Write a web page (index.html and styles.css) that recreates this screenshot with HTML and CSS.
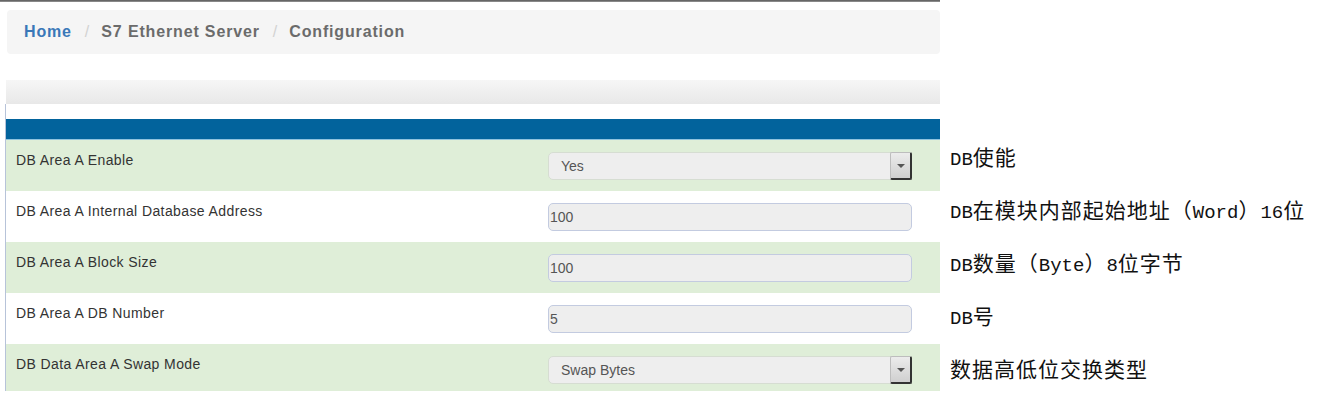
FILE: index.html
```html
<!DOCTYPE html>
<html>
<head>
<meta charset="utf-8">
<link rel="stylesheet" href="styles.css">
</head>
<body>
<div class="page">
  <div class="main">
    <div class="topline"></div>
    <div class="breadcrumb">
      <span class="crumb home">Home</span><span class="divider">/</span><span class="crumb">S7 Ethernet Server</span><span class="divider">/</span><span class="crumb">Configuration</span>
    </div>
    <div class="toolbar"></div>
    <div class="panel">
      <div class="panel-gap"></div>
      <div class="panel-head"></div>
      <div class="row green">
        <div class="label">DB Area A Enable</div>
        <div class="field"><div class="select"><span>Yes</span><div class="arrow"><i></i></div></div></div>
      </div>
      <div class="row">
        <div class="label">DB Area A Internal Database Address</div>
        <div class="field"><div class="input">100</div></div>
      </div>
      <div class="row green">
        <div class="label">DB Area A Block Size</div>
        <div class="field"><div class="input">100</div></div>
      </div>
      <div class="row">
        <div class="label">DB Area A DB Number</div>
        <div class="field"><div class="input">5</div></div>
      </div>
      <div class="row green last">
        <div class="label">DB Data Area A Swap Mode</div>
        <div class="field"><div class="select"><span>Swap Bytes</span><div class="arrow"><i></i></div></div></div>
      </div>
    </div>
  </div>
  <div class="notes">
    <div class="note"><span class="lat">DB</span>使能</div>
    <div class="note"><span class="lat">DB</span>在模块内部起始地址（<span class="lat">Word</span>）<span class="lat">16</span>位</div>
    <div class="note"><span class="lat">DB</span>数量（<span class="lat">Byte</span>）<span class="lat">8</span>位字节</div>
    <div class="note"><span class="lat">DB</span>号</div>
    <div class="note">数据高低位交换类型</div>
  </div>
</div>
</body>
</html>
```

FILE: styles.css
```css
html, body {
  margin: 0;
  padding: 0;
  background: #ffffff;
}

.page {
  display: flex;
  gap: 10px;
  font-family: "Liberation Sans", Arial, sans-serif;
}

.main {
  width: 940px;
  flex: none;
}

.topline {
  height: 2px;
  background: linear-gradient(#555, #999);
}

.breadcrumb {
  margin: 8px 0 0 7px;
  height: 44px;
  background: #f5f5f5;
  border-radius: 4px;
  display: flex;
  align-items: center;
  padding-left: 17px;
  font-weight: bold;
  font-size: 16px;
  letter-spacing: 0.85px;
  color: #6b6b6b;
}

.crumb.home {
  color: #3a78b8;
}

.divider {
  color: #d2d2d2;
  font-weight: normal;
  letter-spacing: 0;
  padding: 0 12px 0 13px;
}

.toolbar {
  margin: 26px 0 0 6px;
  height: 24px;
  background: linear-gradient(#f6f6f6, #e8e8e8);
}

.panel {
  margin-left: 5px;
  border-left: 1px solid #b7c3d9;
}

.panel-gap {
  height: 15px;
}

.panel-head {
  height: 20px;
  background: #02639c;
  border-bottom: 1px solid #8fc3de;
}

.row {
  height: 51px;
  display: flex;
  background: #ffffff;
}

.row.green {
  background: #dfeed8;
}

.row.last {
  height: 47px;
}

.label {
  width: 532px;
  padding: 12px 0 0 10px;
  font-size: 14px;
  color: #333;
  letter-spacing: 0.4px;
}

.field {
  padding-top: 12px;
}

.input,
.select {
  box-sizing: border-box;
  width: 364px;
  height: 28px;
  border: 1px solid #c3cbe0;
  border-radius: 5px;
  background: #eeeeee;
  font-size: 14px;
  color: #555;
  display: flex;
  align-items: center;
}

.input {
  padding-left: 1px;
}

.select {
  border-color: #d6ddd2;
  padding-left: 12px;
  justify-content: space-between;
  position: relative;
}

.arrow {
  box-sizing: border-box;
  width: 22px;
  height: 28px;
  margin-right: -1px;
  background: linear-gradient(#ececec, #cfcfcf);
  border: 1px solid #bdbdbd;
  border-right: 2px solid #333;
  border-bottom: 2px solid #333;
  border-radius: 2px;
  display: flex;
  align-items: center;
  justify-content: center;
}

.arrow i {
  width: 0;
  height: 0;
  border-left: 4px solid transparent;
  border-right: 4px solid transparent;
  border-top: 4px solid #555;
}

.notes {
  padding-top: 130px;
  display: flex;
  flex-direction: column;
}

.note {
  height: 53px;
  line-height: 53px;
  font-family: "Noto Sans CJK SC", "Liberation Mono", sans-serif;
  font-size: 21px;
  letter-spacing: 1px;
  color: #111;
}

.lat {
  font-family: "Liberation Mono", monospace;
  font-size: 19px;
  letter-spacing: 0;
}
```
